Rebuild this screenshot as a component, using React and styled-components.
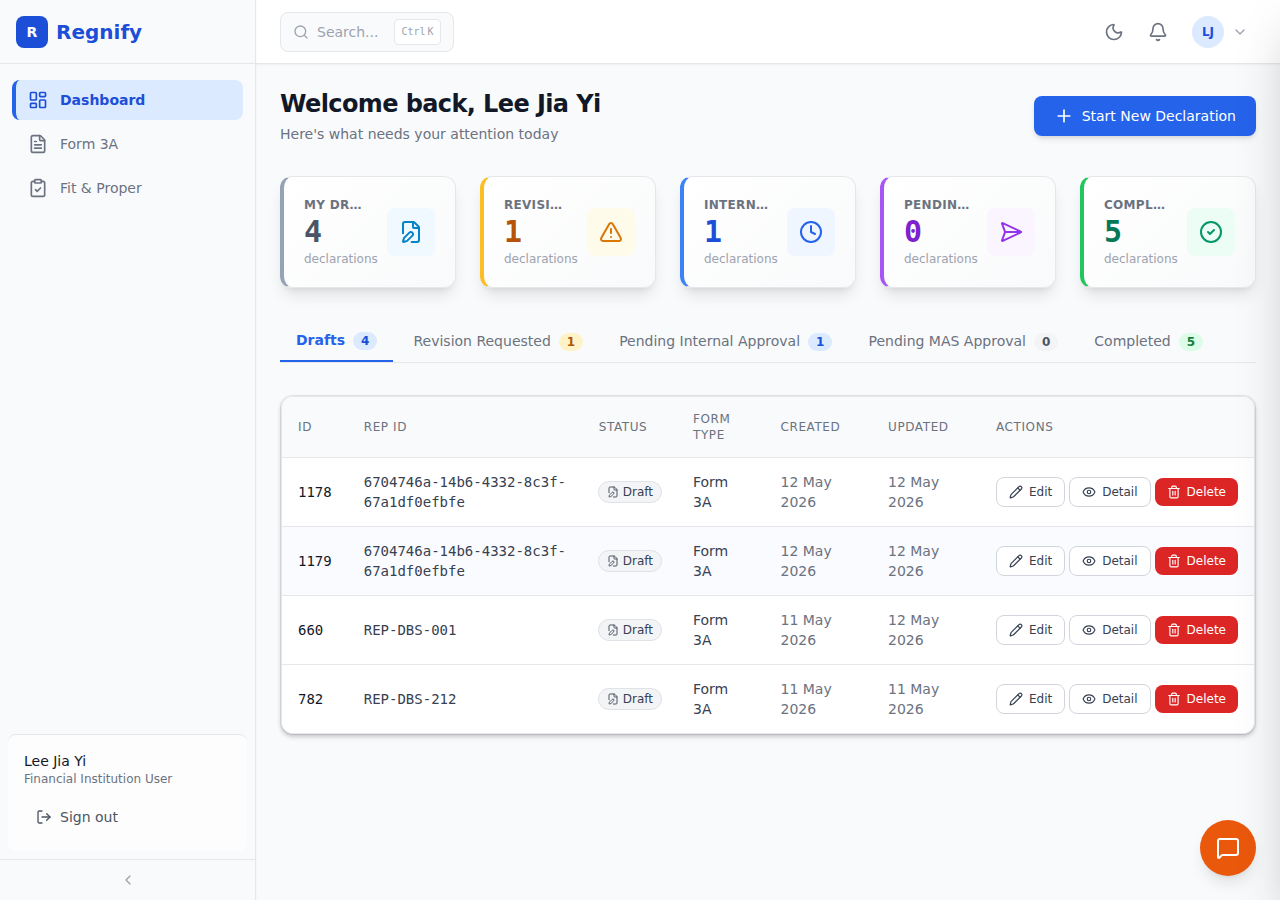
import React from "react";
import styled, { createGlobalStyle, css } from "styled-components";
import {
  LayoutDashboard,
  FileText,
  ClipboardCheck,
  Search,
  Moon,
  Bell,
  ChevronDown,
  ChevronLeft,
  FilePen,
  TriangleAlert,
  Clock,
  SendHorizontal,
  CircleCheck,
  Pencil,
  Plus,
  Eye,
  Trash2,
  LogOut,
  MessageSquare,
} from "lucide-react";

const GlobalStyle = createGlobalStyle`
  *, *::before, *::after { box-sizing: border-box; }
  body {
    margin: 0;
    background: #f9fafc;
    color: #111827;
    font-family: "DejaVu Sans", sans-serif;
    font-size: 14px;
    line-height: 20px;
    overflow-x: hidden;
  }
  button { font: inherit; color: inherit; cursor: pointer; margin: 0; }
  h1, p, ul { margin: 0; padding: 0; }
  svg { flex-shrink: 0; display: block; }
`;

const mono = css`
  font-family: "DejaVu Sans Mono", monospace;
`;

const Shell = styled.div`
  display: flex;
  min-height: 100vh;
`;

const Sidebar = styled.aside`
  position: sticky;
  top: 0;
  display: flex;
  flex-direction: column;
  flex: 0 0 256px;
  height: 100vh;
  background: #f9fafc;
  border-right: 1px solid #e5e7eb;
  box-shadow: 0 1px 2px rgba(0, 0, 0, 0.05);
`;

const Brand = styled.div`
  display: flex;
  align-items: center;
  gap: 8px;
  height: 64px;
  padding: 0 16px;
  border-bottom: 1px solid #e5e7eb;
`;

const BrandMark = styled.span`
  display: grid;
  place-items: center;
  width: 32px;
  height: 32px;
  border-radius: 8px;
  background: #1d4ed8;
  color: #fff;
  font-weight: 700;
`;

const BrandName = styled.span`
  color: #1d4ed8;
  font-size: 20px;
  line-height: 28px;
  font-weight: 700;
`;

const Nav = styled.nav`
  display: flex;
  flex-direction: column;
  gap: 4px;
  flex: 1;
  padding: 16px 12px;
`;

const NavItem = styled.a`
  display: flex;
  align-items: center;
  gap: 12px;
  height: 40px;
  padding: 0 12px;
  border-left: 4px solid ${(p) => (p.$active ? "#2563eb" : "transparent")};
  border-radius: 8px;
  background: ${(p) => (p.$active ? "#dbeafe" : "transparent")};
  color: ${(p) => (p.$active ? "#1d4ed8" : "#6b7280")};
  font-weight: ${(p) => (p.$active ? 600 : 400)};
  text-decoration: none;
`;

const UserCard = styled.div`
  margin: 8px;
  padding: 16px;
  border-top: 1px solid #e5e7eb;
  border-radius: 8px;
  background: #fdfdfd;
`;

const UserRole = styled.p`
  color: #6b7280;
  font-size: 12px;
  line-height: 16px;
`;

const SignOut = styled.button`
  display: flex;
  align-items: center;
  gap: 8px;
  width: 100%;
  height: 36px;
  margin-top: 12px;
  padding: 0 12px;
  border: 0;
  border-radius: 8px;
  background: transparent;
  color: #4b5563;
`;

const Collapse = styled.button`
  display: grid;
  place-items: center;
  height: 41px;
  border: 0;
  border-top: 1px solid #e5e7eb;
  background: transparent;
  color: #9ca3af;
`;

const Column = styled.div`
  flex: 1;
  min-width: 0;
`;

const TopBar = styled.header`
  display: flex;
  align-items: center;
  justify-content: space-between;
  height: 64px;
  padding: 0 24px;
  background: #fff;
  border-bottom: 1px solid #e5e7eb;
  box-shadow: 0 1px 2px rgba(0, 0, 0, 0.05);
`;

const SearchButton = styled.button`
  display: flex;
  align-items: center;
  gap: 8px;
  height: 40px;
  padding: 0 12px;
  border: 1px solid #e5e7eb;
  border-radius: 8px;
  background: #f9fafb;
  color: #9ca3af;
`;

const Shortcut = styled.kbd`
  ${mono}
  display: flex;
  gap: 2px;
  height: 26px;
  margin-left: 8px;
  padding: 4px 6px;
  border: 1px solid #e5e7eb;
  border-radius: 4px;
  background: #fff;
  font-size: 10px;
  line-height: 16px;
`;

const TopActions = styled.div`
  display: flex;
  align-items: center;
  gap: 8px;
`;

const IconButton = styled.button`
  display: grid;
  place-items: center;
  width: 36px;
  height: 36px;
  padding: 0;
  border: 0;
  border-radius: 8px;
  background: transparent;
  color: #6b7280;
`;

const AccountButton = styled.button`
  display: flex;
  align-items: center;
  gap: 8px;
  padding: 4px 8px;
  border: 0;
  border-radius: 8px;
  background: transparent;
  color: #9ca3af;
`;

const Avatar = styled.span`
  display: grid;
  place-items: center;
  width: 32px;
  height: 32px;
  border-radius: 50%;
  background: #dbeafe;
  color: #1d4ed8;
  font-size: 12px;
  line-height: 16px;
  font-weight: 600;
`;

const Main = styled.main`
  display: flex;
  flex-direction: column;
  gap: 32px;
  padding: 24px;
`;

const Hero = styled.section`
  display: flex;
  align-items: center;
  justify-content: space-between;
`;

const Title = styled.h1`
  font-size: 24px;
  line-height: 32px;
  font-weight: 700;
  letter-spacing: -0.025em;
`;

const Subtitle = styled.p`
  margin-top: 4px;
  color: #6b7280;
`;

const PrimaryButton = styled.button`
  display: flex;
  align-items: center;
  gap: 8px;
  height: 40px;
  padding: 0 20px;
  border: 0;
  border-radius: 8px;
  background: #2563eb;
  color: #fff;
  box-shadow: 0 4px 6px -1px rgba(0, 0, 0, 0.1), 0 2px 4px -2px rgba(0, 0, 0, 0.1);
`;

const Stats = styled.section`
  display: grid;
  grid-template-columns: repeat(5, minmax(0, 1fr));
  gap: 24px;
`;

const StatCard = styled.article`
  display: flex;
  align-items: center;
  gap: 16px;
  padding: 20px;
  border: 1px solid #e5e7eb;
  border-left: 4px solid ${(p) => p.$accent};
  border-radius: 12px;
  background: linear-gradient(135deg, #fff, #f9fafb);
  box-shadow: 0 10px 15px -3px rgba(0, 0, 0, 0.1), 0 4px 6px -4px rgba(0, 0, 0, 0.1);
`;

const StatText = styled.div`
  flex: 1;
  min-width: 0;
`;

const StatLabel = styled.p`
  overflow: hidden;
  color: #6b7280;
  font-size: 12px;
  line-height: 16px;
  font-weight: 600;
  letter-spacing: 0.025em;
  text-overflow: ellipsis;
  text-transform: uppercase;
  white-space: nowrap;
`;

const StatValue = styled.p`
  ${mono}
  color: ${(p) => p.$color};
  font-size: 30px;
  line-height: 38px;
  font-weight: 700;
`;

const StatUnit = styled.p`
  color: #9ca3af;
  font-size: 12px;
  line-height: 16px;
  white-space: nowrap;
`;

const StatIcon = styled.div`
  display: grid;
  place-items: center;
  flex: 0 0 48px;
  height: 48px;
  border-radius: 8px;
  background: ${(p) => p.$bg};
  color: ${(p) => p.$color};
`;

const Tabs = styled.div`
  display: flex;
  gap: 4px;
  height: 43px;
  border-bottom: 1px solid #e5e7eb;
`;

const Tab = styled.button`
  display: flex;
  align-items: baseline;
  gap: 8px;
  padding: ${(p) => (p.$active ? "10px" : "11px")} 16px 0;
  border: 0;
  border-bottom: ${(p) => (p.$active ? "2px solid #2563eb" : "0")};
  background: transparent;
  color: ${(p) => (p.$active ? "#2563eb" : "#6b7280")};
  font-weight: ${(p) => (p.$active ? 600 : 400)};
  white-space: nowrap;
`;

const Count = styled.span`
  padding: 1px 8px;
  border-radius: 9px;
  background: ${(p) => p.$bg};
  color: ${(p) => p.$color};
  font-size: 12px;
  line-height: 16px;
  font-weight: 600;
`;

const TableCard = styled.section`
  border: 1px solid #e5e7eb;
  border-radius: 12px;
`;

const TableFrame = styled.div`
  overflow: hidden;
  border: 1px solid #e5e7eb;
  border-radius: 12px;
  background: #fff;
  box-shadow: 0 4px 6px -1px rgba(0, 0, 0, 0.1), 0 2px 4px rgba(0, 0, 0, 0.15);
`;

const Table = styled.table`
  width: 100%;
  border-spacing: 0;
`;

const HeadCell = styled.th`
  width: ${(p) => p.$width || "auto"};
  padding: 14px 16px;
  border-bottom: 1px solid #e5e7eb;
  background: #f9fafb;
  color: #6b7280;
  font-size: 12px;
  line-height: 16px;
  font-weight: 500;
  letter-spacing: 0.05em;
  text-align: left;
  text-transform: uppercase;
`;

const Row = styled.tr`
  background: ${(p) => (p.$highlighted ? "#fafbff" : "#fff")};
  &:last-child td {
    border-bottom: 0;
  }
`;

const cellColors = { strong: "#111827", normal: "#374151", muted: "#6b7280" };

const Cell = styled.td`
  padding: 14px ${(p) => (p.$tight ? "15px" : "16px")};
  border-bottom: 1px solid #e5e7eb;
  color: ${(p) => cellColors[p.$tone || "normal"]};
  ${(p) => p.$mono && mono}
`;

const StatusPill = styled.span`
  display: inline-flex;
  align-items: center;
  gap: 4px;
  padding: 2px 8px;
  border: 1px solid #dfe2e7;
  border-radius: 11px;
  background: #f3f4f6;
  color: #374151;
  font-size: 12px;
  line-height: 16px;
  vertical-align: middle;
  svg {
    color: #4b5563;
  }
`;

const RowActions = styled.div`
  display: flex;
  align-items: center;
  gap: 4px;
`;

const RowButton = styled.button`
  display: flex;
  align-items: center;
  gap: 6px;
  padding: 6px 12px;
  border: ${(p) => (p.$danger ? "0" : "1px solid #d1d5db")};
  border-radius: 8px;
  background: ${(p) => (p.$danger ? "#dc2626" : "#fff")};
  color: ${(p) => (p.$danger ? "#fff" : "#374151")};
  font-size: 12px;
  line-height: 16px;
`;

const ChatButton = styled.button`
  position: fixed;
  right: 24px;
  bottom: 24px;
  display: grid;
  place-items: center;
  width: 56px;
  height: 56px;
  padding: 0;
  border: 0;
  border-radius: 50%;
  background: #ea580c;
  color: #fff;
  box-shadow: 0 10px 15px -3px rgba(0, 0, 0, 0.1), 0 4px 6px -4px rgba(0, 0, 0, 0.1);
`;

/* Closed notification drawer: parked past the right edge, its shadow still falls on the page. */
const Drawer = styled.aside`
  position: fixed;
  top: 0;
  bottom: 0;
  left: 100%;
  width: 384px;
  background: #fff;
  box-shadow: 0 25px 50px -12px rgba(0, 0, 0, 0.25);
  pointer-events: none;
`;

const navItems = [
  { label: "Dashboard", Icon: LayoutDashboard, active: true },
  { label: "Form 3A", Icon: FileText },
  { label: "Fit & Proper", Icon: ClipboardCheck },
];

const stats = [
  { label: "My Drafts", value: 4, Icon: FilePen, accent: "#94a3b8", text: "#4b5563", icon: "#0284c7", bg: "#f0f9ff" },
  { label: "Revision Requested", value: 1, Icon: TriangleAlert, accent: "#fbbf24", text: "#b45309", icon: "#d97706", bg: "#fffbeb" },
  { label: "Internal Approval", value: 1, Icon: Clock, accent: "#3b82f6", text: "#1d4ed8", icon: "#2563eb", bg: "#eff6ff" },
  { label: "Pending MAS", value: 0, Icon: SendHorizontal, accent: "#a855f7", text: "#7e22ce", icon: "#9333ea", bg: "#faf5ff" },
  { label: "Completed", value: 5, Icon: CircleCheck, accent: "#22c55e", text: "#047857", icon: "#059669", bg: "#ecfdf5" },
];

const tabs = [
  { label: "Drafts", count: 4, bg: "#dbeafe", color: "#1d4ed8", active: true },
  { label: "Revision Requested", count: 1, bg: "#fef3c7", color: "#b45309" },
  { label: "Pending Internal Approval", count: 1, bg: "#dbeafe", color: "#1d4ed8" },
  { label: "Pending MAS Approval", count: 0, bg: "#f3f4f6", color: "#4b5563" },
  { label: "Completed", count: 5, bg: "#dcfce7", color: "#15803d" },
];

const columns = [
  { name: "ID" },
  { name: "Rep ID", width: "235px" },
  { name: "Status" },
  { name: "Form Type" },
  { name: "Created" },
  { name: "Updated" },
  { name: "Actions" },
];

const rows = [
  { id: "1178", rep: "6704746a-14b6-4332-8c3f-67a1df0efbfe", created: "12 May 2026", updated: "12 May 2026" },
  { id: "1179", rep: "6704746a-14b6-4332-8c3f-67a1df0efbfe", created: "12 May 2026", updated: "12 May 2026", highlighted: true },
  { id: "660", rep: "REP-DBS-001", created: "11 May 2026", updated: "12 May 2026" },
  { id: "782", rep: "REP-DBS-212", created: "11 May 2026", updated: "11 May 2026" },
];

export default function App() {
  return (
    <>
      <GlobalStyle />
      <Shell>
        <Sidebar>
          <Brand>
            <BrandMark>R</BrandMark>
            <BrandName>Regnify</BrandName>
          </Brand>
          <Nav>
            {navItems.map(({ label, Icon, active }) => (
              <NavItem key={label} href="#" $active={active}>
                <Icon size={20} />
                {label}
              </NavItem>
            ))}
          </Nav>
          <UserCard>
            <p>Lee Jia Yi</p>
            <UserRole>Financial Institution User</UserRole>
            <SignOut>
              <LogOut size={16} />
              Sign out
            </SignOut>
          </UserCard>
          <Collapse aria-label="Collapse sidebar">
            <ChevronLeft size={16} />
          </Collapse>
        </Sidebar>

        <Column>
          <TopBar>
            <SearchButton>
              <Search size={16} />
              <span>Search...</span>
              <Shortcut>
                <span>Ctrl</span>
                <span>K</span>
              </Shortcut>
            </SearchButton>
            <TopActions>
              <IconButton aria-label="Toggle dark mode">
                <Moon size={20} />
              </IconButton>
              <IconButton aria-label="Notifications">
                <Bell size={20} />
              </IconButton>
              <AccountButton aria-label="Account menu">
                <Avatar>LJ</Avatar>
                <ChevronDown size={16} />
              </AccountButton>
            </TopActions>
          </TopBar>

          <Main>
            <Hero>
              <div>
                <Title>Welcome back, Lee Jia Yi</Title>
                <Subtitle>Here's what needs your attention today</Subtitle>
              </div>
              <PrimaryButton>
                <Plus size={20} />
                Start New Declaration
              </PrimaryButton>
            </Hero>

            <Stats>
              {stats.map(({ label, value, Icon, accent, text, icon, bg }) => (
                <StatCard key={label} $accent={accent}>
                  <StatText>
                    <StatLabel>{label}</StatLabel>
                    <StatValue $color={text}>{value}</StatValue>
                    <StatUnit>declarations</StatUnit>
                  </StatText>
                  <StatIcon $bg={bg} $color={icon}>
                    <Icon size={24} />
                  </StatIcon>
                </StatCard>
              ))}
            </Stats>

            <Tabs role="tablist">
              {tabs.map(({ label, count, bg, color, active }) => (
                <Tab key={label} role="tab" aria-selected={!!active} $active={active}>
                  {label}
                  <Count $bg={bg} $color={color}>{count}</Count>
                </Tab>
              ))}
            </Tabs>

            <TableCard>
              <TableFrame>
                <Table>
                  <thead>
                    <tr>
                      {columns.map(({ name, width }) => (
                        <HeadCell key={name} scope="col" $width={width}>{name}</HeadCell>
                      ))}
                    </tr>
                  </thead>
                  <tbody>
                    {rows.map((row) => (
                      <Row key={row.id} $highlighted={row.highlighted}>
                        <Cell $mono $tone="strong">{row.id}</Cell>
                        <Cell $mono>{row.rep}</Cell>
                        <Cell $tight>
                          <StatusPill>
                            <FilePen size={12} />
                            Draft
                          </StatusPill>
                        </Cell>
                        <Cell>Form 3A</Cell>
                        <Cell $tone="muted">{row.created}</Cell>
                        <Cell $tone="muted">{row.updated}</Cell>
                        <Cell>
                          <RowActions>
                            <RowButton>
                              <Pencil size={14} />
                              Edit
                            </RowButton>
                            <RowButton>
                              <Eye size={14} />
                              Detail
                            </RowButton>
                            <RowButton $danger>
                              <Trash2 size={14} />
                              Delete
                            </RowButton>
                          </RowActions>
                        </Cell>
                      </Row>
                    ))}
                  </tbody>
                </Table>
              </TableFrame>
            </TableCard>
          </Main>
        </Column>
      </Shell>
      <ChatButton aria-label="Open chat">
        <MessageSquare size={24} />
      </ChatButton>
      <Drawer aria-hidden="true" />
    </>
  );
}
